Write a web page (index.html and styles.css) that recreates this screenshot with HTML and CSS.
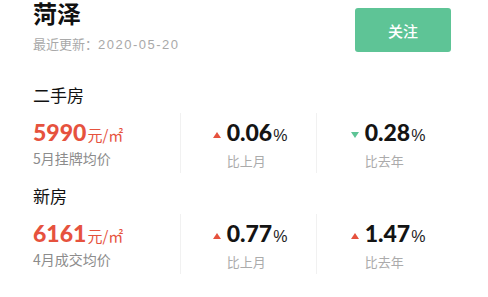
FILE: index.html
```html
<!DOCTYPE html>
<html lang="zh">
<head>
<meta charset="utf-8">
<link rel="stylesheet" href="styles.css">
</head>
<body>
<div class="page">
  <header class="top">
    <div class="city">
      <h1 class="city-name">菏泽</h1>
      <p class="updated">最近更新：<span class="date">2020-05-20</span></p>
    </div>
    <button class="follow">关注</button>
  </header>

  <section class="market">
    <h2 class="market-title">二手房</h2>
    <div class="stats">
      <div class="stat main">
        <div class="price"><b class="price-num">5990</b><span class="unit">元/㎡</span></div>
        <div class="caption">5月挂牌均价</div>
      </div>
      <div class="stat change">
        <div class="change-box">
          <i class="tri up"></i>
          <div class="val"><b>0.06</b><span class="pct">%</span></div>
          <div class="label">比上月</div>
        </div>
      </div>
      <div class="stat change">
        <div class="change-box">
          <i class="tri down"></i>
          <div class="val"><b>0.28</b><span class="pct">%</span></div>
          <div class="label">比去年</div>
        </div>
      </div>
    </div>
  </section>

  <section class="market second">
    <h2 class="market-title">新房</h2>
    <div class="stats">
      <div class="stat main">
        <div class="price"><b class="price-num">6161</b><span class="unit">元/㎡</span></div>
        <div class="caption">4月成交均价</div>
      </div>
      <div class="stat change">
        <div class="change-box">
          <i class="tri up"></i>
          <div class="val"><b>0.77</b><span class="pct">%</span></div>
          <div class="label">比上月</div>
        </div>
      </div>
      <div class="stat change">
        <div class="change-box">
          <i class="tri up"></i>
          <div class="val"><b>1.47</b><span class="pct">%</span></div>
          <div class="label">比去年</div>
        </div>
      </div>
    </div>
  </section>
</div>
</body>
</html>
```

FILE: styles.css
```css
* { box-sizing: border-box; }
html, body { margin: 0; padding: 0; background: #fff; }
body {
  font-family: "Noto Sans CJK SC", "Noto Sans", sans-serif;
  color: #1a1a1a;
}
.page {
  width: 488px;
  padding: 0 32px 0 33px;
}
.top {
  display: flex;
  justify-content: space-between;
  align-items: flex-start;
  padding-right: 5px;
}
.city-name {
  margin: -1px 0 0;
  font-size: 24px;
  line-height: 28px;
  font-weight: 700;
  color: #111;
}
.updated {
  margin: 8px 0 0;
  font-size: 13px;
  line-height: 18px;
  color: #a9a9a9;
}
.date {
  font-family: "Liberation Sans", "Noto Sans CJK SC", sans-serif;
  letter-spacing: 1.5px;
}
.follow {
  margin-top: 8px;
  width: 96px;
  height: 44px;
  border: 0;
  border-radius: 3px;
  background: #5ec496;
  color: #fff;
  font-family: "Noto Sans CJK SC", sans-serif;
  font-size: 15px;
  font-weight: 500;
  padding: 0;
}
.market { margin-top: 29px; }
.market.second { margin-top: 11px; }
.market-title {
  margin: 0;
  font-size: 17px;
  line-height: 24px;
  font-weight: 400;
  color: #111;
}
.stats {
  margin-top: 6px;
  display: grid;
  grid-template-columns: 147px 136px 140px;
}
.stat {
  padding: 6px 0 3px;
}
.stat.change {
  border-left: 1px solid #f1f1f1;
  display: flex;
  justify-content: center;
}
.price {
  display: flex;
  align-items: baseline;
  height: 26px;
  line-height: 26px;
}
.price-num {
  font-family: "Lato", sans-serif;
  font-weight: 900;
  font-size: 23px;
  color: #e6523e;
}
.unit {
  font-size: 15px;
  line-height: 15px;
  color: #e6523e;
  margin-left: 1px;
}
.caption {
  margin-top: 3px;
  font-size: 14px;
  line-height: 20px;
  color: #8c8c8c;
}
.change-box {
  display: grid;
  grid-template-columns: auto auto;
  grid-template-rows: auto auto;
  align-items: center;
  column-gap: 6px;
  margin-left: 3px;
}
.tri {
  width: 0;
  height: 0;
  border-left: 4.5px solid transparent;
  border-right: 4.5px solid transparent;
  margin-top: 6px;
}
.tri.up { border-bottom: 6.5px solid #e6523e; }
.tri.down { border-top: 6.5px solid #5ec496; }
.val {
  display: flex;
  align-items: baseline;
  height: 26px;
  line-height: 26px;
}
.val b {
  font-family: "Lato", sans-serif;
  font-weight: 900;
  font-size: 23px;
  color: #141414;
}
.pct {
  font-family: "Liberation Sans", sans-serif;
  font-size: 16px;
  line-height: 16px;
  color: #222;
  margin-left: 1px;
}
.label {
  grid-column: 2;
  margin-top: 7px;
  font-size: 13px;
  line-height: 18px;
  color: #ababab;
}
```
